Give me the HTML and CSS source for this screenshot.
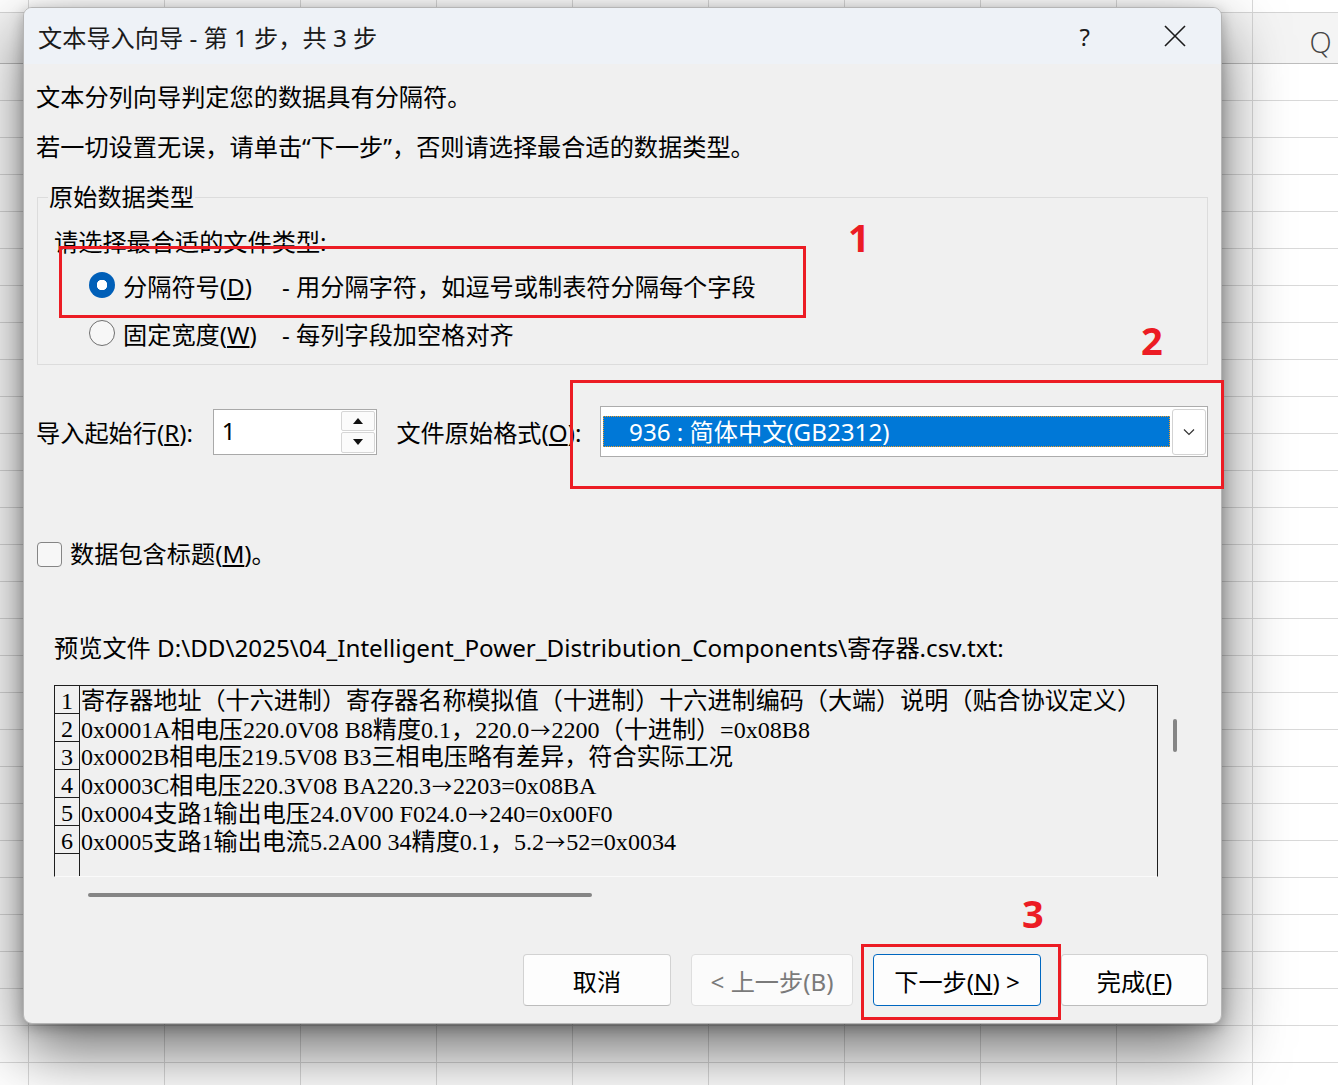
FILE: index.html
```html
<!DOCTYPE html>
<html lang="zh-CN">
<head>
    <meta charset="UTF-8">
    <meta name="viewport" content="width=device-width, initial-scale=1.0">
    <title>文本导入向导</title>
    <link rel="stylesheet" href="styles.css">
</head>
<body>

    <!-- worksheet behind the dialog -->
    <div class="sheet">
        <div class="col-heads">
            <div class="corner"></div>
            <div class="col"></div>
            <div class="col"></div>
            <div class="col"></div>
            <div class="col"></div>
            <div class="col"></div>
            <div class="col"></div>
            <div class="col"></div>
            <div class="col"></div>
            <div class="col"></div>
            <div class="col">Q</div>
        </div>
    </div>

    <div class="dialog">
        <div class="titlebar">
            <span class="title">文本导入向导 - 第 1 步，共 3 步</span>
            <span class="help">?</span>
            <svg class="close" width="22" height="22" viewBox="0 0 22 22">
                <path d="M1 1 L21 21 M21 1 L1 21" stroke="#1b1b1b" stroke-width="1.6" fill="none"/>
            </svg>
        </div>

        <div class="content">
            <p class="line first">文本分列向导判定您的数据具有分隔符。</p>
            <p class="line">若一切设置无误，请单击“下一步”，否则请选择最合适的数据类型。</p>

            <fieldset class="group">
                <legend>原始数据类型</legend>
                <p class="hint">请选择最合适的文件类型:</p>
                <div class="radio-row first">
                    <span class="radio checked"></span>
                    <span class="opt">分隔符号(<u>D</u>)</span>
                    <span class="desc">- 用分隔字符，如逗号或制表符分隔每个字段</span>
                </div>
                <div class="radio-row">
                    <span class="radio"></span>
                    <span class="opt">固定宽度(<u>W</u>)</span>
                    <span class="desc">- 每列字段加空格对齐</span>
                </div>
            </fieldset>

            <div class="start-row">
                <span class="start-label">导入起始行(<u>R</u>):</span>
                <div class="spin">
                    <span class="spin-val">1</span>
                    <div class="spin-btns">
                        <span class="spin-btn"><i class="tri up"></i></span>
                        <span class="spin-btn"><i class="tri down"></i></span>
                    </div>
                </div>
                <span class="enc-label">文件原始格式(<u>O</u>):</span>
                <div class="combo">
                    <span class="combo-val">936 : 简体中文(GB2312)</span>
                    <span class="combo-btn">
                        <svg width="12" height="8" viewBox="0 0 12 8">
                            <path d="M1 1.5 L6 6.5 L11 1.5" stroke="#333" stroke-width="1.2" fill="none"/>
                        </svg>
                    </span>
                </div>
            </div>

            <div class="check-row">
                <span class="check"></span>
                <span>数据包含标题(<u>M</u>)。</span>
            </div>

            <p class="preview-label">预览文件 D:\DD\2025\04_Intelligent_Power_Distribution_Components\寄存器.csv.txt:</p>

            <div class="preview-wrap">
                <div class="preview">
                    <div class="gutter">
                        <div class="ln">1</div>
                        <div class="ln">2</div>
                        <div class="ln">3</div>
                        <div class="ln">4</div>
                        <div class="ln">5</div>
                        <div class="ln">6</div>
                    </div>
                    <div class="lines">
                        <div class="row">寄存器地址（十六进制）寄存器名称模拟值（十进制）十六进制编码（大端）说明（贴合协议定义）</div>
                        <div class="row">0x0001A相电压220.0V08 B8精度0.1，220.0<span class="arw">→</span>2200（十进制）=0x08B8</div>
                        <div class="row">0x0002B相电压219.5V08 B3三相电压略有差异，符合实际工况</div>
                        <div class="row">0x0003C相电压220.3V08 BA220.3<span class="arw">→</span>2203=0x08BA</div>
                        <div class="row">0x0004支路1输出电压24.0V00 F024.0<span class="arw">→</span>240=0x00F0</div>
                        <div class="row">0x0005支路1输出电流5.2A00 34精度0.1，5.2<span class="arw">→</span>52=0x0034</div>
                    </div>
                </div>
                <div class="vscroll"><span class="vthumb"></span></div>
            </div>
            <div class="hscroll"><span class="hthumb"></span></div>

            <div class="buttons">
                <button class="btn cancel">取消</button>
                <button class="btn prev" disabled>&lt; 上一步(B)</button>
                <button class="btn next">下一步(<u>N</u>) &gt;</button>
                <button class="btn finish">完成(<u>F</u>)</button>
            </div>
        </div>

        <!-- red callouts -->
        <div class="mark box1"></div>
        <div class="mark box2"></div>
        <div class="mark box3"></div>
        <span class="num n1">1</span>
        <span class="num n2">2</span>
        <span class="num n3">3</span>
    </div>

</body>
</html>
```

FILE: styles.css
```css
body {
    margin: 0;
    height: 100vh;
    overflow: hidden;
    font-family: "Noto Sans", "Noto Sans CJK SC", sans-serif;
    background-color: #fff;
    background-image:
        linear-gradient(to right, #d9d9d9 1px, transparent 1px),
        linear-gradient(to bottom, #d9d9d9 1px, transparent 1px);
    background-size: 136px 100%, 100% 37px;
    background-position: 28px 0, 0 63px;
}

/* worksheet */
.sheet {
    padding-top: 12px;
}
.col-heads {
    display: flex;
    height: 50px;
    background: #f4f4f4;
    border-top: 1px solid #d4d4d4;
    border-bottom: 1px solid #bdbdbd;
}
.corner {
    width: 28px;
    flex: none;
}
.col {
    width: 135px;
    flex: none;
    border-left: 1px solid #d4d4d4;
    display: flex;
    justify-content: center;
    align-items: flex-end;
    padding-bottom: 2px;
    font-family: "Open Sans", sans-serif;
    font-weight: 300;
    font-size: 29px;
    color: #444;
}

/* dialog window */
.dialog {
    position: absolute;
    left: 23px;
    top: 7px;
    width: 1199px;
    height: 1017px;
    box-sizing: border-box;
    background: #f0f0f0;
    border: 1px solid #b5b5b5;
    border-radius: 9px;
    box-shadow: 0 26px 64px rgba(0, 0, 0, 0.58), 0 4px 14px rgba(0, 0, 0, 0.25);
    color: #000;
    font-size: 24.2px;
}
.titlebar {
    height: 56px;
    display: flex;
    align-items: center;
    padding-left: 14px;
    background: #eef2f7;
    border-radius: 8px 8px 0 0;
}
.title {
    flex: 1;
    color: #1b1b1b;
}
.help {
    font-size: 24px;
    color: #1b1b1b;
    margin-right: 74px;
}
.close {
    margin-right: 35px;
}

.content {
    padding: 0 13px 0 12px;
}
.line {
    margin: 16px 0 0;
    line-height: 34px;
}

/* file type group */
.group {
    margin: 16px 0 0 1px;
    width: 1171px;
    box-sizing: border-box;
    padding: 11px 0 7px 10px;
    border: 1px solid #dcdcdc;
}
.group legend {
    padding: 0 1px;
    line-height: 34px;
}
.hint {
    margin: 0 0 0 6px;
    line-height: 34px;
}
.radio-row {
    height: 48px;
    display: flex;
    align-items: center;
    padding-left: 41px;
}
.radio-row.first {
    margin-top: 2px;
}
.radio {
    width: 26px;
    height: 26px;
    box-sizing: border-box;
    border-radius: 50%;
    border: 1.5px solid #6f6f6f;
    background: #f7f7f7;
    margin-right: 8px;
    flex: none;
}
.radio.checked {
    border: none;
    background: radial-gradient(circle, #fff 0 5px, #005fb8 5.5px);
}
.opt {
    width: 159px;
}

/* start row + encoding */
.start-row {
    margin-top: 41px;
    height: 51px;
    display: flex;
    align-items: center;
}
.start-label {
    width: 177px;
}
.spin {
    width: 165px;
    height: 46px;
    box-sizing: border-box;
    border: 1px solid #a9a9a9;
    background: #fff;
    display: flex;
}
.spin-val {
    flex: 1;
    padding-left: 8px;
    line-height: 42px;
}
.spin-btns {
    width: 34px;
    display: flex;
    flex-direction: column;
    padding: 1px 1px 1px 0;
    gap: 1px;
}
.spin-btn {
    flex: 1;
    border: 1px solid #d6d6d6;
    border-radius: 2px;
    background: #fbfbfb;
    display: flex;
    align-items: center;
    justify-content: center;
}
.tri {
    width: 0;
    height: 0;
    border-left: 5px solid transparent;
    border-right: 5px solid transparent;
}
.tri.up {
    border-bottom: 6px solid #111;
}
.tri.down {
    border-top: 6px solid #111;
}
.enc-label {
    margin-left: 19px;
    width: 204px;
}
.combo {
    width: 609px;
    height: 51px;
    box-sizing: border-box;
    border: 1px solid #acacac;
    background: #fff;
    display: flex;
    align-items: center;
    padding: 0 1px 0 2px;
}
.combo-val {
    flex: 1;
    height: 31px;
    line-height: 31px;
    margin-right: 2px;
    padding-left: 26px;
    background: #0078d7;
    color: #fff;
    outline: 1px dotted #f29b22;
    outline-offset: -1px;
}
.combo-btn {
    width: 34px;
    height: 46px;
    box-sizing: border-box;
    border: 1px solid #d3d3d3;
    border-radius: 3px;
    background: #fff;
    display: flex;
    align-items: center;
    justify-content: center;
}

/* header checkbox */
.check-row {
    margin-top: 80px;
    line-height: 34px;
    display: flex;
    align-items: center;
    padding-left: 1px;
}
.check {
    width: 25px;
    height: 25px;
    box-sizing: border-box;
    border: 1px solid #858585;
    border-radius: 4px;
    background: #f7f7f7;
    margin-right: 8px;
}

/* preview */
.preview-label {
    margin: 60px 0 0 18px;
    line-height: 34px;
}
.preview-wrap {
    margin: 20px 0 0 18px;
    display: flex;
}
.preview {
    width: 1104px;
    height: 192px;
    box-sizing: border-box;
    border: 1px solid #1e1e1e;
    border-bottom: 1px solid #fafafa;
    overflow: hidden;
    display: flex;
    font-family: "Liberation Serif", "Noto Sans CJK SC", serif;
    font-size: 24.1px;
}
.gutter {
    width: 24px;
    flex: none;
    border-right: 1px solid #1e1e1e;
}
.ln {
    height: 28px;
    box-sizing: border-box;
    border-bottom: 1px solid #1e1e1e;
    text-align: center;
    line-height: 31px;
}
.lines {
    padding-left: 1px;
    white-space: nowrap;
}
.row {
    height: 28px;
    line-height: 31px;
}
.arw {
    font-family: "Noto Sans CJK SC", sans-serif;
    font-size: 20px;
    padding: 0 1px;
}
.vscroll {
    width: 4px;
    margin-left: 15px;
    padding-top: 34px;
}
.vthumb {
    display: block;
    width: 4px;
    height: 33px;
    border-radius: 2px;
    background: #858585;
}
.hscroll {
    height: 28px;
    box-sizing: border-box;
    padding: 16px 0 0 52px;
}
.hthumb {
    display: block;
    width: 504px;
    height: 4px;
    border-radius: 2px;
    background: #858585;
}

/* wizard buttons */
.buttons {
    margin-top: 49px;
    display: flex;
    justify-content: flex-end;
    gap: 20px;
}
.btn {
    height: 52px;
    font-family: inherit;
    font-size: 24.2px;
    color: #000;
    background: #fdfdfd;
    border: 1px solid #d2d2d2;
    border-bottom-color: #bcbcbc;
    border-radius: 4px;
    padding: 0;
}
.cancel {
    width: 148px;
}
.prev {
    width: 162px;
    color: #7a7a7a;
    background: #fbfbfb;
    border-color: #dedede;
}
.next {
    width: 168px;
    border-color: #0067c0;
}
.finish {
    width: 147px;
}

/* red callouts */
.mark {
    position: absolute;
    border: 3px solid #ec1c24;
    box-sizing: border-box;
}
.box1 {
    left: 35px;
    top: 238px;
    width: 747px;
    height: 72px;
}
.box2 {
    left: 546px;
    top: 372px;
    width: 654px;
    height: 109px;
}
.box3 {
    left: 837px;
    top: 936px;
    width: 200px;
    height: 76px;
}
.num {
    position: absolute;
    font-family: "Open Sans", sans-serif;
    font-weight: 700;
    font-size: 38px;
    line-height: 38px;
    color: #ec1c24;
}
.n1 {
    left: 824px;
    top: 210px;
}
.n2 {
    left: 1117px;
    top: 313px;
}
.n3 {
    left: 998px;
    top: 886px;
}
```
